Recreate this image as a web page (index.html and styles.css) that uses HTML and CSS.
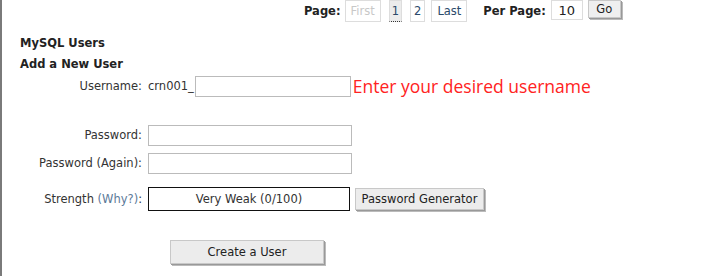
FILE: index.html
```html
<!DOCTYPE html>
<html lang="en">
<head>
    <meta charset="UTF-8">
    <title>MySQL Users</title>
    <link rel="stylesheet" href="styles.css">
</head>
<body>
    <div class="page">
        <div class="pager">
            <span class="pager-label">Page:</span>
            <span class="pg disabled">First</span>
            <span class="pg num current">1</span>
            <span class="pg num">2</span>
            <span class="pg">Last</span>
            <span class="pager-label per">Per Page:</span>
            <input class="perpage" type="text" value="10">
            <button class="go">Go</button>
        </div>

        <h2>MySQL Users</h2>
        <h3>Add a New User</h3>

        <table class="form">
            <tr>
                <td class="lbl">Username:</td>
                <td class="fld">
                    <div class="user-row">
                        <span class="prefix">crn001_</span>
                        <input class="txt user" type="text">
                        <span class="hint">Enter your desired username</span>
                    </div>
                </td>
            </tr>
            <tr class="spacer"><td colspan="2"></td></tr>
            <tr>
                <td class="lbl">Password:</td>
                <td class="fld"><input class="txt" type="password"></td>
            </tr>
            <tr>
                <td class="lbl">Password (Again):</td>
                <td class="fld"><input class="txt" type="password"></td>
            </tr>
            <tr class="strength-row">
                <td class="lbl">Strength <span class="why">(Why?)</span>:</td>
                <td class="fld">
                    <div class="strength-wrap">
                        <div class="strength">Very Weak (0/100)</div>
                        <button class="btn gen">Password Generator</button>
                    </div>
                </td>
            </tr>
        </table>

        <div class="submit">
            <button class="btn create">Create a User</button>
        </div>
    </div>
</body>
</html>
```

FILE: styles.css
```css
body{
    margin: 0;
    background: #fff;
    font-family: "DejaVu Sans", Verdana, sans-serif;
    font-size: 11.5px;
    color: #333;
}
.page{
    border-left: 2px solid #7a7a7a;
    min-height: 276px;
    box-sizing: border-box;
}
.pager{
    display: flex;
    align-items: flex-start;
    padding-left: 302px;
    height: 22px;
}
.pager-label{
    font-weight: bold;
    color: #222;
    margin-top: 4px;
    margin-right: 4px;
}
.pager-label.per{
    margin-left: 10px;
}
.pg{
    border: 1px solid #ddd;
    padding: 3px 5px;
    margin-right: 6px;
    color: #2b4a6a;
    line-height: 14px;
}
.pg.num{
    padding: 3px 3px;
}
.pg.disabled{
    color: #c8c8c8;
    margin-right: 8px;
}
.pg.current{
    background: #ececec;
    border-bottom: 1px dotted #333;
    padding: 3px 2px;
    margin-right: 8px;
}
.perpage{
    width: 32px;
    height: 20px;
    box-sizing: border-box;
    border: 1px solid #ddd;
    text-align: center;
    font: 13px "DejaVu Sans", sans-serif;
    color: #222;
    margin-left: 1px;
    padding: 0;
}
.go{
    margin-left: 5px;
    width: 33px;
    height: 18px;
    padding: 0;
    font: 11.5px "DejaVu Sans", sans-serif;
    color: #222;
    background: #efefef;
    border: 1px solid #c8c8c8;
    box-shadow: 1px 1px 0 #999, 2px 2px 0 #bbb;
}
h2, h3{
    font-size: 11.5px;
    font-weight: bold;
    color: #222;
    margin: 0 0 0 18px;
}
h2{
    padding-top: 14px;
}
h3{
    padding-top: 7px;
}
.form{
    border-collapse: collapse;
    margin-top: 1px;
}
.form td{
    padding: 0;
}
.lbl{
    width: 140px;
    text-align: right;
    padding-right: 6px !important;
    white-space: nowrap;
}
.fld{
    height: 28px;
}
.user-row{
    display: flex;
    align-items: center;
}
.prefix{
    margin-right: 1px;
}
.txt{
    width: 204px;
    height: 21px;
    box-sizing: border-box;
    border: 1px solid #bbb;
    padding: 0 3px;
    margin: 0;
    display: block;
}
.txt.user{
    width: 156px;
}
.hint{
    font-family: "Open Sans", "Noto Sans", sans-serif;
    font-size: 17.5px;
    color: #ff2222;
    margin-left: 2px;
}
.spacer td{
    height: 21px;
}
.strength-row .fld{
    height: 43px;
}
.why{
    color: #5c7a99;
}
.strength-wrap{
    display: flex;
    align-items: center;
}
.strength{
    width: 202px;
    height: 24px;
    box-sizing: border-box;
    border: 1px solid #111;
    text-align: center;
    line-height: 22px;
}
.btn{
    font: 11.5px "DejaVu Sans", sans-serif;
    color: #222;
    background: #ececec;
    border: 1px solid #c8c8c8;
    box-shadow: 1px 1px 0 #999, 2px 2px 0 #bbb;
    padding: 0;
}
.gen{
    margin-left: 5px;
    width: 129px;
    height: 22px;
}
.submit{
    padding-left: 168px;
    margin-top: 20px;
}
.create{
    width: 154px;
    height: 24px;
}
```
